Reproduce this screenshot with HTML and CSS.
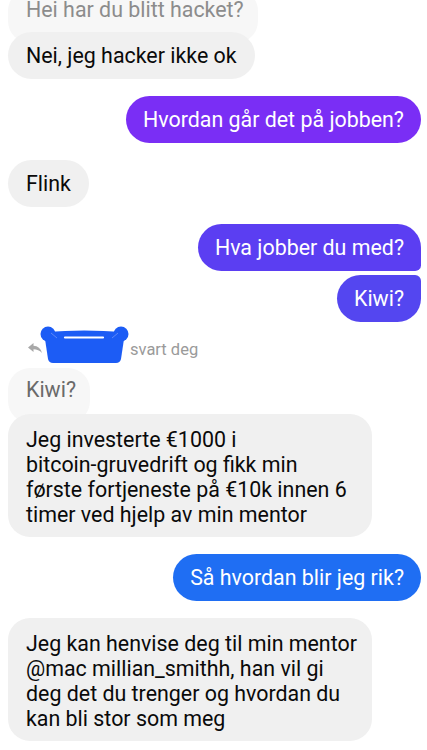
FILE: index.html
```html
<!DOCTYPE html>
<html lang="no">
<head>
<meta charset="utf-8">
<link rel="stylesheet" href="styles.css">
</head>
<body>
<div class="chat">
  <div class="in-group">
    <div class="quote quote-top">Hei har du blitt hacket?</div>
    <div class="bubble in in-over">Nei, jeg hacker ikke ok</div>
  </div>

  <div class="bubble out out-1 gap">Hvordan går det på jobben?</div>

  <div class="bubble in gap">Flink</div>

  <div class="bubble out out-2 gap first">Hva jobber du med?</div>
  <div class="bubble out out-3 last">Kiwi?</div>

  <div class="reply-row">
    <svg class="reply-arrow" width="14" height="10" viewBox="0 0 14 10">
      <path d="M0 4.5 L5.5 0 L5.5 2.8 Q12 3 14 10 Q10.5 6.3 5.5 6.3 L5.5 9 Z" fill="#a8a8a8"/>
    </svg>
    <svg class="scribble" width="90" height="38" viewBox="0 0 90 38">
      <g fill="#1c5cf5">
        <circle cx="8" cy="8" r="7.5"/>
        <circle cx="81" cy="8" r="7.5"/>
        <path d="M6 6 Q44 3 83 6 L84 13 L81 33 Q80 37 76 37 L13 37 Q9 37 8 33 L5 13 Z"/>
      </g>
      <line x1="25" y1="11.5" x2="63" y2="11.5" stroke="#ffffff" stroke-width="2.2" stroke-linecap="round"/>
      <line x1="11" y1="7" x2="17" y2="12" stroke="#6f93f7" stroke-width="0.8"/>
      <line x1="78" y1="7" x2="72" y2="12" stroke="#6f93f7" stroke-width="0.8"/>
    </svg>
    <span class="reply-text">svart deg</span>
  </div>

  <div class="in-group">
    <div class="quote quote-kiwi">Kiwi?</div>
    <div class="bubble in wide in-over2">Jeg investerte €1000 i<br>bitcoin-gruvedrift og fikk min<br>første fortjeneste på €10k innen 6<br>timer ved hjelp av min mentor</div>
  </div>

  <div class="bubble out out-4 gap">Så hvordan blir jeg rik?</div>

  <div class="bubble in wide gap">Jeg kan henvise deg til min mentor<br>@mac millian_smithh, han vil gi<br>deg det du trenger og hvordan du<br>kan bli stor som meg</div>
</div>
</body>
</html>
```

FILE: styles.css
```css
* {
  box-sizing: border-box;
}

html, body {
  margin: 0;
  padding: 0;
  background: #ffffff;
}

body {
  width: 427px;
  height: 750px;
  overflow: hidden;
  font-family: Roboto, "Noto Sans", "Liberation Sans", sans-serif;
}

.chat {
  display: flex;
  flex-direction: column;
  align-items: flex-start;
  padding: 0 6px 0 8px;
  margin-top: -11px;
}

.in-group {
  display: flex;
  flex-direction: column;
  align-items: flex-start;
}

.bubble {
  font-size: 21.4px;
  line-height: 25px;
  padding: 11px 18px;
  border-radius: 24px;
  white-space: nowrap;
}

.gap {
  margin-top: 17px;
}

.in {
  background: #f0f0f0;
  color: #0a0a0a;
}

.out {
  align-self: flex-end;
  color: #ffffff;
  padding: 11px 17px;
}

.out-1 { background: #7a2ef5; }
.out-2 { background: #5b3ef2; }
.out-3 { background: #5446f0; margin-top: 4px; }
.out-4 { background: #1f6ef3; }

.first { border-bottom-right-radius: 6px; }
.last { border-top-right-radius: 6px; }

.quote {
  background: #f7f7f7;
  font-size: 21.4px;
  line-height: 26px;
  border-radius: 22px;
  padding: 8px 18px 20px;
  white-space: nowrap;
}

.quote-top {
  color: #8c8c8c;
  width: 250px;
}

.quote-kiwi {
  color: #6a6a6a;
  width: 82px;
  padding: 9px 18px 20px;
}

.in-over {
  margin-top: -11px;
}

.in-over2 {
  margin-top: -9px;
}

.wide {
  width: 364px;
  padding: 13px 18px 10px;
  border-radius: 22px;
}

.reply-row {
  display: flex;
  align-items: center;
  height: 46px;
  padding-left: 20px;
}

.reply-arrow {
  margin-top: 6px;
}

.scribble {
  margin-left: -2px;
  margin-top: 0;
}

.reply-text {
  font-size: 16.5px;
  color: #9a9a9a;
  margin-left: 0;
  margin-top: 8px;
}
```
